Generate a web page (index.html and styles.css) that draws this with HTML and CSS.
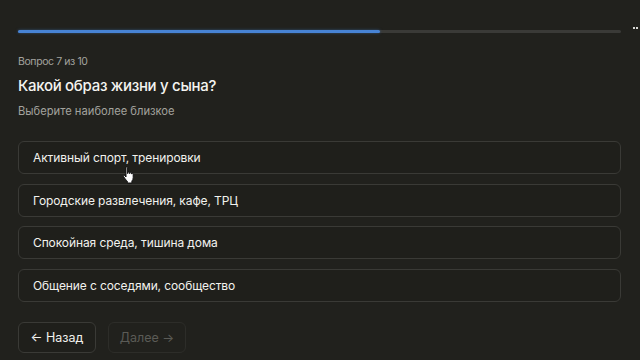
FILE: index.html
```html
<!DOCTYPE html>
<html lang="ru">
<head>
<meta charset="utf-8">
<link rel="stylesheet" href="styles.css">
</head>
<body>
<div class="page">
  <div class="progress">
    <div class="track"><div class="fill" style="width:60%"></div></div>
    <span class="mark"></span>
  </div>
  <div class="step">Вопрос 7 из 10</div>
  <h1 class="title">Какой образ жизни у сына?</h1>
  <div class="hint">Выберите наиболее близкое</div>
  <div class="options">
    <button class="option">Активный спорт, тренировки</button>
    <button class="option">Городские развлечения, кафе, ТРЦ</button>
    <button class="option">Спокойная среда, тишина дома</button>
    <button class="option">Общение с соседями, сообщество</button>
  </div>
  <div class="nav">
    <button class="btn">← Назад</button>
    <button class="btn disabled">Далее →</button>
  </div>
  <svg class="cursor" width="14" height="18" viewBox="0 0 14 18">
    <path d="M4 1.5c0-.8 1.6-.8 1.6 0v6l.4-.1V6.5c0-.8 1.5-.8 1.5 0v1l.4 0v-.6c0-.8 1.5-.8 1.5 0v1l.3 0c0-.8 1.5-.8 1.5 0v3.8c0 1.5-.6 2.5-1.3 3.300V17H5.300v-1.8C4.2 14.3 2.8 12.5 1.6 10.6c-.5-.8.5-1.6 1.2-.9L4 11z" fill="#fff" stroke="#111" stroke-width="1"/>
  </svg>
</div>
</body>
</html>
```
FILE: styles.css
```css
html, body {
  margin: 0;
  padding: 0;
  background: #21211d;
  overflow: hidden;
}
.page {
  position: relative;
  width: 640px;
  height: 360px;
  box-sizing: border-box;
  padding: 29px 19px 0 18px;
  font-family: Inter, "Noto Sans", sans-serif;
  color: #f2f2ee;
}
.progress {
  display: flex;
  align-items: center;
  height: 4px;
}
.track {
  flex: 1;
  height: 3px;
  background: #3a3a37;
  border-radius: 2px;
}
.fill {
  height: 100%;
  background: #4783d4;
  border-radius: 2px;
  box-shadow: 0 0 3px rgba(70, 130, 210, 0.5);
}
.mark {
  position: absolute;
  left: 633px;
  top: 27px;
  width: 5px;
  height: 2px;
  border-left: 2px solid #d8d8d4;
  border-right: 2px solid #d8d8d4;
  box-sizing: border-box;
}
.step {
  margin-top: 22px;
  font-size: 10.5px;
  letter-spacing: -0.4px;
  color: #a3a39e;
  line-height: 14px;
}
.title {
  margin: 7px 0 0;
  font-size: 15px;
  font-weight: 500;
  letter-spacing: -0.3px;
  line-height: 20px;
  color: #f4f4f0;
}
.hint {
  margin-top: 8px;
  font-size: 11.2px;
  color: #a3a39e;
  line-height: 15px;
}
.options {
  margin-top: 22px;
  display: flex;
  flex-direction: column;
  gap: 9.5px;
}
.option {
  display: block;
  width: 100%;
  height: 33px;
  box-sizing: border-box;
  padding: 0 14px;
  text-align: left;
  background: #1f1f1b;
  border: 1px solid #3a3a36;
  border-radius: 6px;
  font-family: inherit;
  font-size: 12px;
  letter-spacing: -0.1px;
  color: #f2f2ee;
}
.nav {
  margin-top: 20.5px;
  display: flex;
  gap: 12px;
}
.btn {
  width: 78px;
  height: 31px;
  box-sizing: border-box;
  background: #1f1f1b;
  border: 1px solid #3a3a36;
  border-radius: 6px;
  font-family: inherit;
  font-size: 12.5px;
  color: #f2f2ee;
  padding: 0;
}
.btn.disabled {
  color: #5b5b56;
  border-color: #2d2d29;
  background: #21211d;
}
.cursor {
  position: absolute;
  left: 122px;
  top: 166px;
}
```
